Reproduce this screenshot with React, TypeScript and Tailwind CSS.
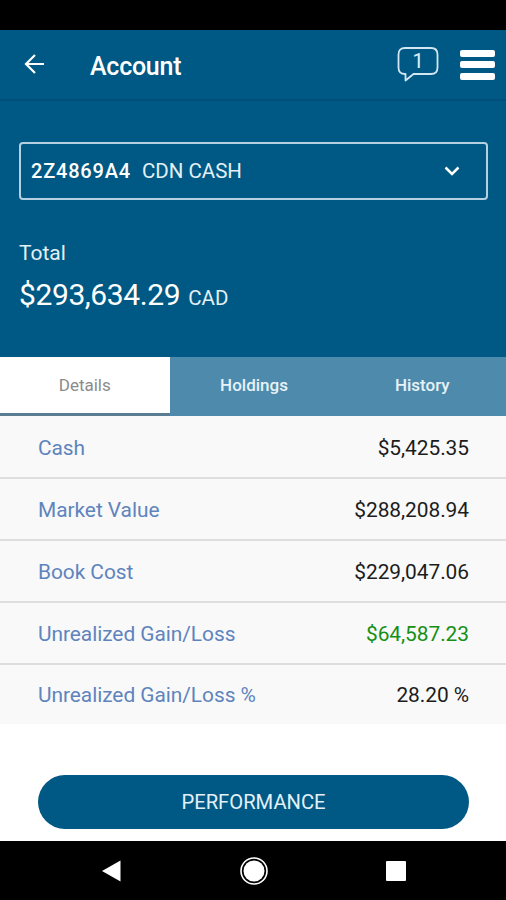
import React, { useState } from 'react';

interface DetailRow {
  label: string;
  value: string;
  positive?: boolean;
}

const tabs = ['Details', 'Holdings', 'History'];

const details: DetailRow[] = [
  { label: 'Cash', value: '$5,425.35' },
  { label: 'Market Value', value: '$288,208.94' },
  { label: 'Book Cost', value: '$229,047.06' },
  { label: 'Unrealized Gain/Loss', value: '$64,587.23', positive: true },
  { label: 'Unrealized Gain/Loss %', value: '28.20 %' }
];

const Header: React.FC = () => (
  <header className="flex h-[71px] items-center border-b-2 border-[#004f7b] pl-6 pr-[11px]">
    <button className="mb-[2px]" aria-label="Back">
      <svg className="block h-5 w-5" viewBox="0 0 20 20" fill="none" stroke="white" strokeWidth="2.2">
        <path d="M20 10H2.500M11 1l-9 9 9 9" />
      </svg>
    </button>
    <h1 className="ml-[46px] mt-[4px] flex-1 text-[25px] font-medium leading-8 tracking-[-0.25px]">Account</h1>
    <button className="relative mb-[2px]" aria-label="Messages">
      <svg className="block h-[36px] w-[42px]" viewBox="0 0 42 36" fill="none" stroke="#d3e6f1" strokeWidth="1.8" strokeLinejoin="round">
        <path d="M8 2h26q6.500 0 6.500 6.500v13q0 6.500-6.500 6.500h-17.500l-8 6.500v-6.500h-.5q-6.500 0-6.500-6.500v-13q0-6.500 6.500-6.500z" />
      </svg>
      <span className="absolute inset-x-0 top-px text-center text-xl leading-[28px] text-[#e3f0f7]">1</span>
    </button>
    <button className="ml-[21px] flex flex-col gap-[4.5px]" aria-label="Menu">
      <span className="h-[7px] w-[35px] rounded-xs bg-white" />
      <span className="h-[7px] w-[35px] rounded-xs bg-white" />
      <span className="h-[7px] w-[35px] rounded-xs bg-white" />
    </button>
  </header>
);

const AccountSummary: React.FC = () => (
  <section className="h-[256px] pl-[19px] pr-[18px] pt-[41px]">
    <button className="flex h-[58px] w-full items-center rounded-[4px] border-2 border-[#b5d0e0] pl-[10px] pr-[26px] text-xl">
      <span className="font-medium tracking-[0.8px]">2Z4869A4</span>
      <span className="ml-[11px] text-[20.5px] text-[#e3f0f7]">CDN CASH</span>
      <svg className="ml-auto h-[10px] w-4" viewBox="0 0 16 10" fill="none" stroke="white" strokeWidth="2.500">
        <path d="M1.500 1.500L8 8l6.500-6.500" />
      </svg>
    </button>
    <p className="mt-[40px] text-[21px] leading-[26px] text-[#e3f0f7]">Total</p>
    <p className="mt-[11px] flex items-baseline leading-[36px]">
      <span className="text-[30px] tracking-[-0.4px]">$293,634.29</span>
      <span className="ml-[8px] text-[20.5px] text-[#e3f0f7]">CAD</span>
    </p>
  </section>
);

const NavigationBar: React.FC = () => (
  <nav className="flex h-[59px] items-center justify-between bg-black pl-[102px] pr-[100px]">
    <svg className="h-[22px] w-[19px]" viewBox="0 0 19 22" fill="white">
      <path d="M0 11L18.500.5v21z" />
    </svg>
    <svg className="h-[30px] w-[30px]" viewBox="0 0 30 30">
      <circle cx="15" cy="15" r="13" fill="none" stroke="white" strokeWidth="1.600" />
      <circle cx="15" cy="15" r="10.500" fill="white" />
    </svg>
    <span className="h-5 w-5 rounded-[1px] bg-white" />
  </nav>
);

export default function App() {
  const [activeTab, setActiveTab] = useState('Details');

  return (
    <div className="flex h-[900px] w-[506px] flex-col overflow-hidden bg-white font-[Roboto,sans-serif]">
      <div className="h-[30px] bg-black" />
      <div className="bg-[#005984] text-white">
        <Header />
        <AccountSummary />
      </div>

      <div className="grid h-[59px] grid-cols-[169.5px_169px_1fr] bg-[#4d8aab]">
        {tabs.map(tab => (
          <button
            key={tab}
            onClick={() => setActiveTab(tab)}
            className={`border-b-[3px] pt-[2px] text-[17px] ${
              activeTab === tab
                ? 'border-[#5b7d94] bg-white text-[#8b8b8b]'
                : 'border-transparent font-medium text-[#e6f2f8]'
            }`}
          >
            {tab}
          </button>
        ))}
      </div>

      <div className="divide-y-2 divide-[#dedede] bg-[#f9f9f9]">
        {details.map(row => (
          <div
            key={row.label}
            className="flex h-[62px] items-center justify-between pl-[38px] pr-[37px] pt-[4px] text-[20.9px] tracking-[-0.05px] first:h-[63px] last:h-[59px] last:pt-[3px]"
          >
            <span className="text-[#5f84bd]">{row.label}</span>
            <span className={row.positive ? 'text-[#159015]' : 'text-[#1c1c1c]'}>{row.value}</span>
          </div>
        ))}
      </div>

      <div className="flex flex-1 items-end pb-[12px] pl-[38px] pr-[37px]">
        <button className="h-[54px] w-full rounded-full bg-[#005984] pt-px text-[20.2px] text-[#e3f0f7]">
          PERFORMANCE
        </button>
      </div>

      <NavigationBar />
    </div>
  );
}
